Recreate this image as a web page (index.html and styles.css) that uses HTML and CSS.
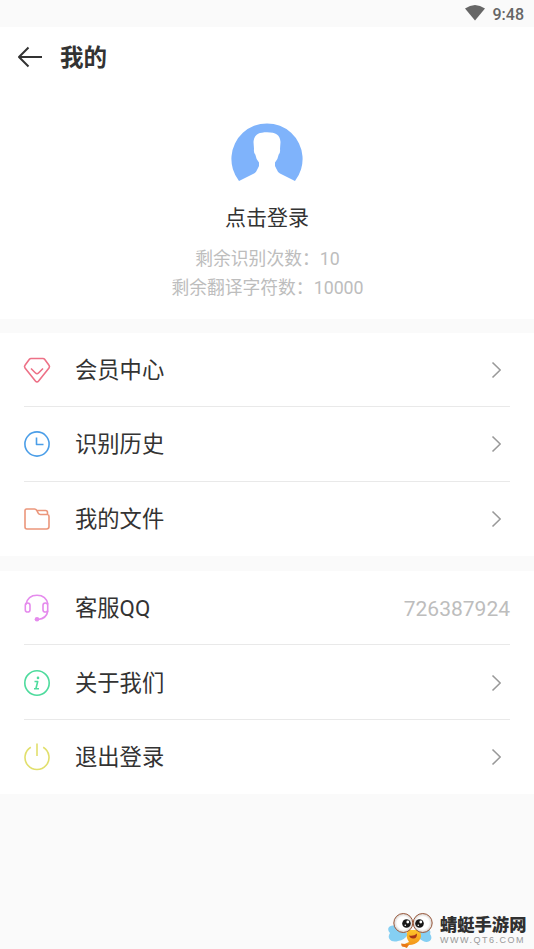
FILE: index.html
```html
<!DOCTYPE html>
<html lang="zh-CN">
<head>
<meta charset="utf-8">
<title>我的</title>
<link rel="stylesheet" href="styles.css">
</head>
<body>
<div class="status">
  <svg class="wifi" width="20" height="16" viewBox="0 0 20 16"><path d="M0 3.6Q10-3.4 20 3.6L10 15.6Z"/></svg>
  <span>9:48</span>
</div>
<header class="header">
  <svg class="line back" width="26" height="22" viewBox="0 0 26 22"><path d="M11.5 1.5 2 11l9.500 9.500M2 11h23"/></svg>
  <h1>我的</h1>
</header>
<section class="profile">
  <svg class="avatar" width="72" height="60" viewBox="0 0 72 60"><path d="M8 58A35.600 35.600 0 1 1 64 58L49 50.500Q46.500 49 45.500 46L44 43V39.500Q47 36 47.700 31.500Q49.500 30 49 26L49.500 19C49 12 45 9.300 36 9.300S23 12 22.500 19L23 26Q22.500 30 24.300 31.500Q25 36 28 39.500V43L26.500 46Q25.500 49 23 50.500Z"/></svg>
  <div class="login">点击登录</div>
  <div class="quota">剩余识别次数：10</div>
  <div class="quota">剩余翻译字符数：10000</div>
</section>
<main>
  <section class="group">
    <div class="row">
      <svg class="line icon vip" viewBox="0 0 28 28"><path d="M8 2.500H20Q21 2.500 21.600 3.300L26 9.300Q27 10.600 26 11.900L15.600 25Q14 26.800 12.400 25L2 11.900Q1 10.600 2 9.300L6.400 3.300Q7 2.500 8 2.500ZM8 12.500 12.500 17Q14 18.500 15.500 17L20 12.500"/></svg>
      <span class="label">会员中心</span>
      <svg class="line chevron" viewBox="0 0 12 18"><path d="m1.500 1.500 7.700 7.500-7.700 7.500"/></svg>
    </div>
    <div class="row">
      <svg class="line icon clock" viewBox="0 0 28 28"><circle cx="14" cy="14" r="12.100"/><path d="M13.500 7.500V14.500H20.500"/></svg>
      <span class="label">识别历史</span>
      <svg class="line chevron" viewBox="0 0 12 18"><path d="m1.500 1.500 7.700 7.500-7.700 7.500"/></svg>
    </div>
    <div class="row">
      <svg class="line icon folder" viewBox="0 0 28 28"><path d="M3.500 4H11.500Q13 4 13.800 5.500H22.500Q24.500 5.500 24.500 7.500V9.500Q26 9.700 26 11.500V21.500Q26 24 23.500 24H4Q2 24 2 22V5.500Q2 4 3.500 4ZM13.800 5.500 15.200 8.200Q15.900 9.500 17.500 9.500H24.500"/></svg>
      <span class="label">我的文件</span>
      <svg class="line chevron" viewBox="0 0 12 18"><path d="m1.500 1.500 7.700 7.500-7.700 7.500"/></svg>
    </div>
  </section>
  <section class="group">
    <div class="row">
      <svg class="line icon service" viewBox="0 0 28 28"><path d="M3 10.500C4 5 8 1.300 14 1.300S24 5 25 10.500M25 16.500C24 22 21 25 15 25.500"/><rect x="2.300" y="9" width="4.700" height="9" rx="2.350"/><rect x="20" y="9" width="4.700" height="9" rx="2.350"/><circle class="dot" cx="14" cy="25.300" r="2.300"/></svg>
      <span class="label">客服QQ</span>
      <span class="value">726387924</span>
    </div>
    <div class="row">
      <svg class="line icon about" viewBox="0 0 28 28"><circle cx="14" cy="14" r="12.200"/><path d="M11.500 12.500H14.700L12.900 19.700H16M11 19.700H13"/><circle class="dot" cx="15" cy="8.900" r="1.300"/></svg>
      <span class="label">关于我们</span>
      <svg class="line chevron" viewBox="0 0 12 18"><path d="m1.500 1.500 7.700 7.500-7.700 7.500"/></svg>
    </div>
    <div class="row">
      <svg class="line icon power" viewBox="0 0 28 28"><path d="M14 .5V13M7.800 4.300A12 12 0 1 0 20.200 4.300"/></svg>
      <span class="label">退出登录</span>
      <svg class="line chevron" viewBox="0 0 12 18"><path d="m1.500 1.500 7.700 7.500-7.700 7.500"/></svg>
    </div>
  </section>
</main>
<footer class="brand">
  <svg width="46" height="36" viewBox="0 0 46 36">
    <defs>
      <radialGradient id="eye"><stop offset=".65" stop-color="#fff"/><stop offset="1" stop-color="#d5d0cc"/></radialGradient>
      <linearGradient id="body" x1="0" y1="0" x2="0" y2="1"><stop stop-color="#ffc52a"/><stop offset="1" stop-color="#f08a16"/></linearGradient>
    </defs>
    <path fill="#85cff3" d="M9 14C2 12-1 17 3 21C-1 27 5 31 11 29Q18 28 21 22ZM33 18C40 15 45 18 43 22C47 27 42 32 36 29L28 24Z"/>
    <path fill="url(#body)" d="M21 18H32Q36 24 32 29Q28 33 22 33Q20 34 20 36L14 33Q18 32 22 30Q18 25 21 18Z"/>
    <path fill="#e87818" d="m14 31.500 8 1-2 3-5-1Z"/>
    <circle cx="16.300" cy="11" r="9.500" fill="url(#eye)" stroke="#98583c"/>
    <circle cx="35.700" cy="11" r="9.500" fill="url(#eye)" stroke="#98583c"/>
    <circle cx="19.500" cy="11.500" r="4.300" fill="#171717"/><circle cx="32.500" cy="11.500" r="4.300" fill="#171717"/>
    <circle cx="20.800" cy="10" r="1.400" fill="#fff"/><circle cx="33.800" cy="10" r="1.400" fill="#fff"/>
    <circle cx="18.300" cy="13.300" r=".8" fill="#fff"/><circle cx="31.300" cy="13.300" r=".8" fill="#fff"/>
    <path fill="#a73518" d="M22 23.500Q27 24.500 30 21.500Q30 27 26 26.500Q23 26.500 22 23.500Z"/>
  </svg>
  <div class="brand-text"><div class="brand-name">蜻蜓手游网</div><div class="brand-url">WWW.QT6.COM</div></div>
</footer>
</body>
</html>
```
FILE: styles.css
```css
* { box-sizing: border-box; }
body {
  margin: 0;
  height: 949px;
  overflow: hidden;
  display: flex;
  flex-direction: column;
  background: #fafafa;
  color: #333;
  font-family: Roboto, "Noto Sans CJK SC", sans-serif;
}
svg { display: block; flex: none; overflow: visible; }
.line { fill: none; stroke: currentColor; stroke-width: 1.6; stroke-linejoin: round; }
.dot { fill: currentColor; stroke: none; }
.status {
  height: 27px;
  padding: 2px 10px 0 0;
  display: flex;
  justify-content: flex-end;
  align-items: center;
  gap: 8px;
  color: #666;
  font-size: 16px;
  font-weight: 500;
}
.wifi { fill: #666; margin-top: -3px; }
.header {
  height: 61px;
  padding-left: 17px;
  display: flex;
  align-items: center;
  background: #fff;
}
.back { stroke-width: 2; margin-top: -1px; }
h1 { margin: 1px 0 0 17px; font-size: 23.5px; line-height: 34px; font-weight: 700; }
.profile {
  height: 231px;
  padding-top: 35px;
  display: flex;
  flex-direction: column;
  align-items: center;
  background: #fff;
}
.avatar { fill: #7fb3fb; }
.login { margin: 19px 0 10px; font-size: 21px; line-height: 32px; }
.quota { padding-left: 1px; color: #bdbdbd; font-size: 17.8px; line-height: 29px; white-space: nowrap; }
.group { margin-top: 14px; padding: 0 24px; background: #fff; }
.group + .group { margin-top: 15px; }
.row { height: 74.3px; padding-top: 1px; display: flex; align-items: center; border-bottom: 1px solid #e9e9e9; }
.row:last-child { height: 74.6px; border-bottom-color: transparent; }
.icon { width: 28px; height: 28px; margin-left: -1px; }
.label { flex: 1; margin-left: 24px; font-size: 22.3px; line-height: 34px; }
.value { color: #bdbdbd; font-size: 21px; padding-top: 1px; }
.chevron { width: 12px; height: 18px; margin-right: 7px; color: #999; }
.vip { color: #ed7187; }
.clock { color: #4b9ee8; }
.folder { color: #eb967b; }
.service { color: #e58bed; }
.about { color: #4edb9d; }
.power { color: #e1df6c; }
.brand { margin-top: auto; height: 37px; padding-left: 387px; display: flex; }
.brand-text { margin: 1px 0 0 7px; white-space: nowrap; }
.brand-name { font-size: 17.3px; line-height: 24px; font-weight: 900; color: #303030; }
.brand-url { margin-top: -2px; font-family: "Liberation Sans", sans-serif; font-size: 9px; line-height: 10px; letter-spacing: 1.5px; color: #999; }
```
